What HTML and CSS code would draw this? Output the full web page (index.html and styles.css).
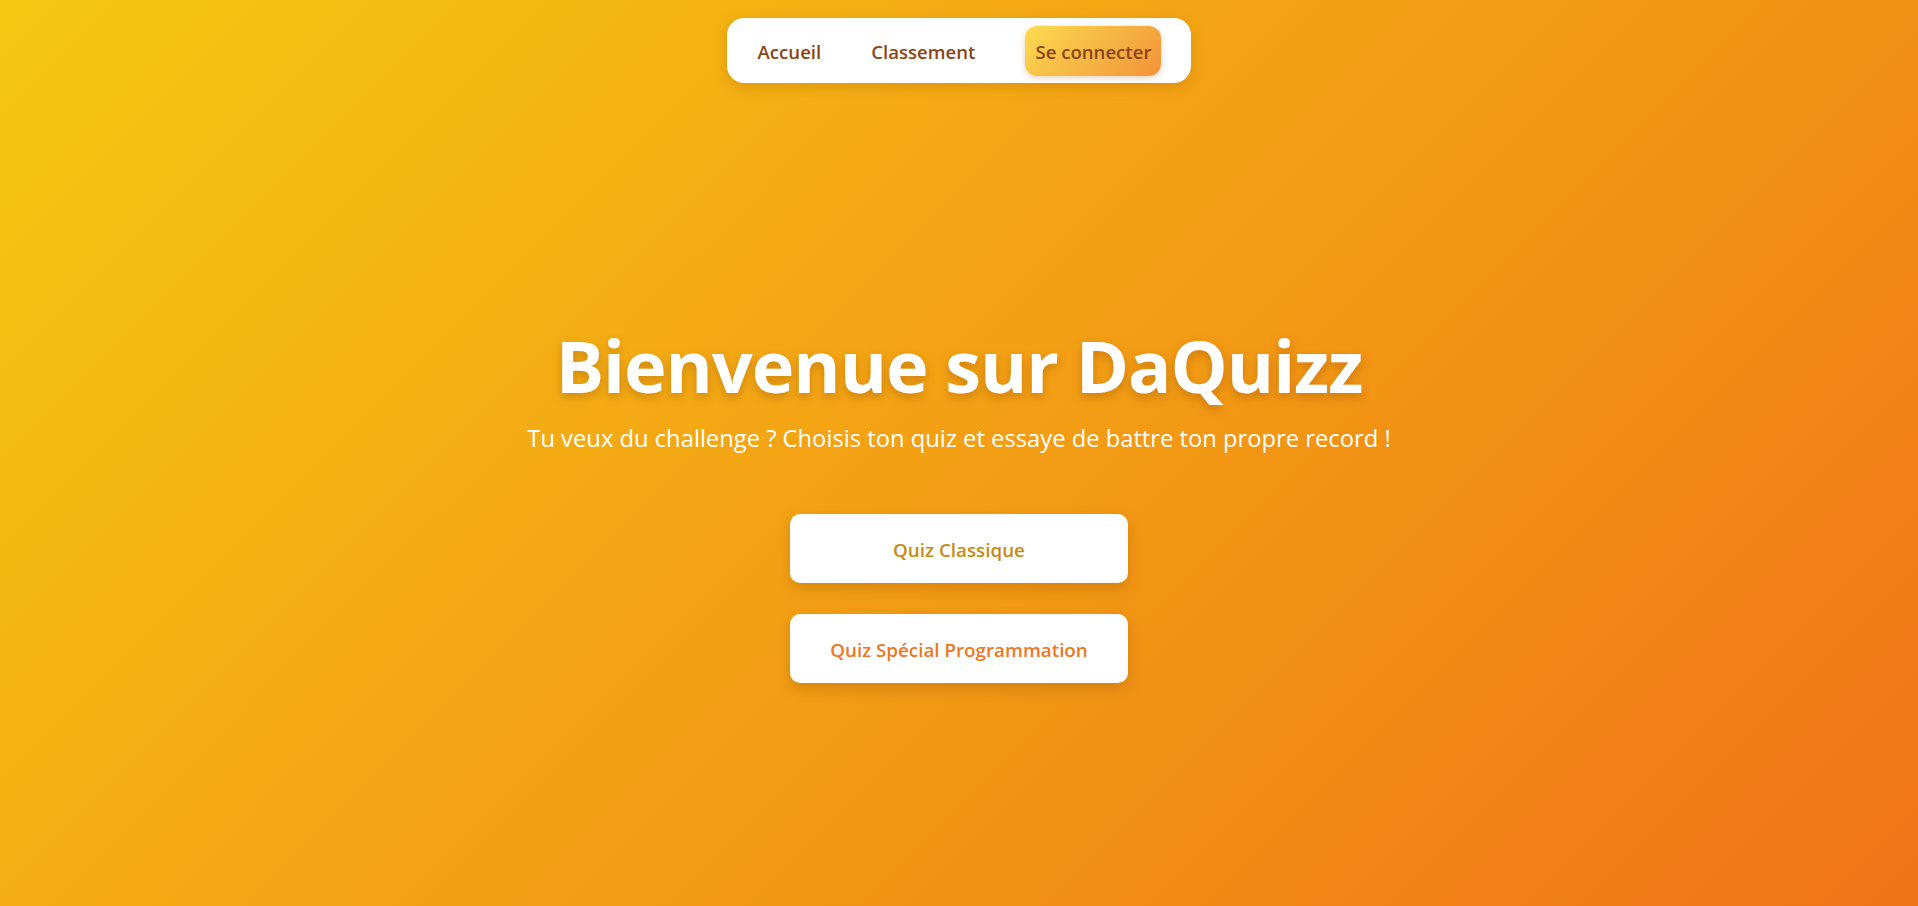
FILE: index.html
```html
<!DOCTYPE html>
<html lang="fr">
<head>
<meta charset="utf-8">
<title>DaQuizz</title>
<link rel="stylesheet" href="styles.css">
</head>
<body>
<header class="topbar">
  <nav class="nav">
    <a class="nav-link" href="#">Accueil</a>
    <a class="nav-link" href="#">Classement</a>
    <a class="nav-btn" href="#">Se connecter</a>
  </nav>
</header>
<main class="hero">
  <h1 class="title">Bienvenue sur DaQuizz</h1>
  <p class="subtitle">Tu veux du challenge ? Choisis ton quiz et essaye de battre ton propre record !</p>
  <div class="choices">
    <a class="choice choice-classic" href="#">Quiz Classique</a>
    <a class="choice choice-prog" href="#">Quiz Spécial Programmation</a>
  </div>
</main>
</body>
</html>
```
FILE: styles.css
```css
* { box-sizing: border-box; }
html, body { margin: 0; padding: 0; }
body {
  height: 906px;
  overflow: hidden;
  font-family: "Open Sans", "Noto Sans", "Liberation Sans", sans-serif;
  background: linear-gradient(135deg, #f5c811 0%, #f39f14 50%, #f07317 100%);
  color: #fff;
}
a { text-decoration: none; }

.topbar {
  display: flex;
  justify-content: center;
  padding-top: 18px;
}
.nav {
  display: flex;
  align-items: center;
  gap: 30px;
  background: #fff;
  border-radius: 17px;
  padding: 8px 30px 7px 21px;
  box-shadow: 0 4px 14px rgba(150, 80, 0, 0.25);
}
.nav-link, .nav-btn {
  color: #8b4513;
  font-size: 18.6px;
  font-weight: 600;
  line-height: 24px;
}
.nav-link { padding: 14px 10px 12px; }
.nav-btn {
  margin-left: 10px;
  padding: 14px 10px 12px;
  border-radius: 12px;
  background: linear-gradient(135deg, #fddb50 0%, #f6b744 50%, #f3923a 100%);
  box-shadow: 0 2px 6px rgba(150, 80, 0, 0.25);
}

.hero {
  display: flex;
  flex-direction: column;
  align-items: center;
  padding-top: 239px;
}
.title {
  margin: 0;
  font-size: 72px;
  font-weight: 700;
  line-height: 86px;
  letter-spacing: -1px;
  text-shadow: 0 4px 10px rgba(140, 70, 0, 0.35);
}
.subtitle {
  margin: 14px 0 0;
  font-size: 23.75px;
  line-height: 32px;
  font-weight: 400;
}
.choices {
  display: flex;
  flex-direction: column;
  gap: 31px;
  margin-top: 60px;
}
.choice {
  display: flex;
  align-items: center;
  justify-content: center;
  width: 338px;
  height: 69px;
  padding-top: 2px;
  background: #fff;
  border-radius: 10px;
  font-size: 18.8px;
  font-weight: 600;
  box-shadow: 0 6px 14px rgba(150, 80, 0, 0.3);
}
.choice-classic { color: #c98a12; }
.choice-prog { color: #f0761f; }
```
